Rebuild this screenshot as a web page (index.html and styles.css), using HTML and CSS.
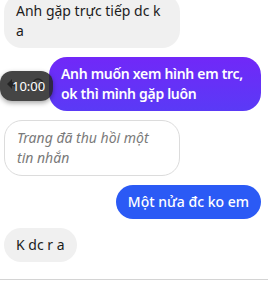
FILE: index.html
```html
<!DOCTYPE html>
<html lang="vi">
<head>
  <meta charset="UTF-8" />
  <meta name="viewport" content="width=device-width, initial-scale=1.0" />
  <title>Tin nhắn</title>
  <link rel="stylesheet" href="styles.css">
</head>
<body>
  <div class="chat">
    <div class="row left">
      <div class="bubble gray">Anh gặp trực tiếp dc k a</div>
    </div>

    <div class="row right hovered">
      <div class="actions">
        <svg class="icon reply" width="10" height="14" viewBox="0 0 10 14">
          <path d="M1 7 L6 2 L6 5 C9 5 10 8 10 12 C9 9 8 9 6 9 L6 12 Z" fill="#111" />
        </svg>
        <svg class="icon smile" width="12" height="12" viewBox="0 0 12 12">
          <circle cx="6" cy="6" r="5" fill="none" stroke="#111" stroke-width="1.4" />
        </svg>
      </div>
      <div class="bubble purple">Anh muốn xem hình em trc, ok thì mình gặp luôn</div>
      <div class="tooltip">10:00</div>
    </div>

    <div class="row left">
      <div class="bubble recalled">Trang đã thu hồi một tin nhắn</div>
    </div>

    <div class="row right">
      <div class="bubble blue">Một nửa đc ko em</div>
    </div>

    <div class="row left">
      <div class="bubble gray">K dc r a</div>
    </div>
  </div>
  <div class="composer-line"></div>
</body>
</html>
```

FILE: styles.css
```css
body {
  margin: 0;
  font-family: "Noto Sans", Arial, sans-serif;
  background-color: #fff;
  color: #111;
  overflow: hidden;
}

.chat {
  display: flex;
  flex-direction: column;
  gap: 9px;
  margin-top: -6px;
  padding: 0 7px 0 4px;
}

.row {
  display: flex;
  align-items: center;
}

.row.left {
  justify-content: flex-start;
}

.row.right {
  justify-content: flex-end;
}

.hovered {
  position: relative;
}

.bubble {
  font-size: 14px;
  line-height: 20px;
  padding: 7px 12px;
  border-radius: 18px;
  max-width: 152px;
}

.gray {
  background-color: #f0f0f0;
  color: #1c1c1c;
}

.purple {
  background: linear-gradient(180deg, #7128f8 0%, #5a3af6 100%);
  color: #fff;
  font-weight: 600;
  letter-spacing: -0.3px;
  max-width: 190px;
  padding-right: 10px;
}

.blue {
  background-color: #2b5af5;
  color: #fff;
  font-weight: 500;
}

.recalled {
  border: 1px solid #dcdcdc;
  color: #7a7a7a;
  font-style: italic;
  max-width: 150px;
}

.actions {
  display: flex;
  align-items: center;
  gap: 16px;
  margin-right: auto;
  padding-left: 2px;
}

.tooltip {
  position: absolute;
  left: -4px;
  top: 14px;
  background-color: rgba(38, 38, 38, 0.86);
  color: #fff;
  font-size: 13px;
  line-height: 30px;
  padding: 0 8px 0 12px;
  border-radius: 12px;
  box-shadow: 0 2px 5px rgba(0, 0, 0, 0.35);
}

.composer-line {
  margin-top: 17px;
  border-top: 1px solid #d4d4d4;
}
```
